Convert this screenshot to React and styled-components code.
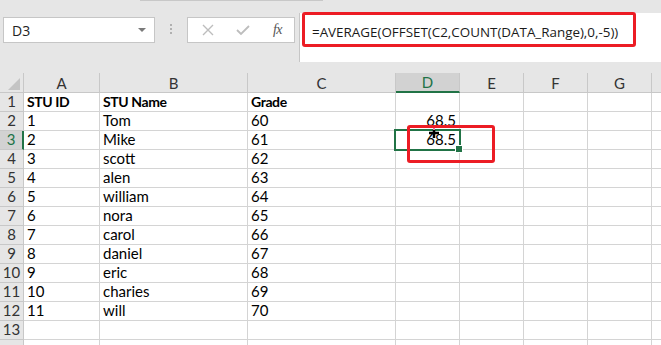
import React from 'react';
import styled, { createGlobalStyle } from 'styled-components';

const GlobalStyle = createGlobalStyle`
  html, body {
    margin: 0;
    padding: 0;
  }
  body {
    width: 661px;
    height: 345px;
    overflow: hidden;
    background: #e6e6e6;
  }
`;

const Window = styled.div`
  position: relative;
  width: 661px;
  height: 345px;
  overflow: hidden;
  background: #e6e6e6;
  font-family: Lato, 'Liberation Sans', sans-serif;
`;

const RibbonEdge = styled.div`
  margin-left: 140px;
  width: 183px;
  height: 1px;
  background: #c8c8c8;
`;

const Toolbar = styled.div`
  display: flex;
  align-items: flex-start;
  height: 72px;
  padding-top: 12px;
  box-sizing: border-box;
`;

const NameBox = styled.div`
  display: flex;
  align-items: center;
  justify-content: space-between;
  margin: 4px 0 0 3px;
  width: 152px;
  height: 26px;
  padding: 0 8px 0 8px;
  box-sizing: border-box;
  background: #fff;
  border: 1px solid #c6c6c6;
  font-family: 'Open Sans', 'Liberation Sans', sans-serif;
  font-size: 14px;
  color: #222;
`;

const DropArrow = styled.span`
  width: 0;
  height: 0;
  border-left: 4px solid transparent;
  border-right: 4px solid transparent;
  border-top: 4px solid #7a7a7a;
`;

const Grip = styled.div`
  display: flex;
  flex-direction: column;
  align-items: center;
  gap: 2px;
  width: 32px;
  margin-top: 11px;
  span {
    width: 2px;
    height: 2px;
    background: #b0b0b0;
  }
`;

const FxBox = styled.div`
  display: grid;
  grid-template-columns: repeat(3, 35px);
  align-items: center;
  justify-items: center;
  margin-top: 4px;
  width: 108px;
  height: 26px;
  padding-left: 2px;
  box-sizing: border-box;
  background: #fff;
  border: 1px solid #c6c6c6;
`;

const FxLabel = styled.span`
  font-family: 'Liberation Serif', serif;
  font-style: italic;
  font-size: 14px;
  color: #555;
  letter-spacing: -0.5px;
`;

const FormulaBar = styled.div`
  flex: 1;
  margin-left: 4px;
  height: 49px;
  padding: 9px 0 0 12px;
  box-sizing: border-box;
  background: #fff;
  border-left: 1px solid #c6c6c6;
  font-family: 'Open Sans', 'Liberation Sans', sans-serif;
  font-size: 13.4px;
  line-height: 20px;
  color: #1a1a1a;
  white-space: nowrap;
`;

const Sheet = styled.div`
  display: grid;
  grid-template-columns: 24px 76px 148px 148px 64px 64px 64px 64px 10px;
  grid-auto-rows: 19px;
  grid-template-rows: 20px;
  background: #fff;
`;

const Cell = styled.div`
  display: flex;
  align-items: flex-end;
  justify-content: ${({ $right }) => ($right ? 'flex-end' : 'flex-start')};
  padding: 0 3px 1px 3px;
  box-sizing: border-box;
  border-right: 1px solid #d4d4d4;
  border-bottom: 1px solid #d4d4d4;
  font-size: ${({ $bold }) => ($bold ? '14px' : '15px')};
  letter-spacing: ${({ $bold }) => ($bold ? '-0.4px' : '0')};
  line-height: 17px;
  font-weight: ${({ $bold }) => ($bold ? 700 : 400)};
  color: #000;
  white-space: nowrap;
  overflow: hidden;
`;

const ColHead = styled.div`
  display: flex;
  align-items: center;
  justify-content: center;
  box-sizing: border-box;
  background: ${({ $active }) => ($active ? '#d2d2d2' : '#e6e6e6')};
  border-right: 1px solid #c8c8c8;
  border-bottom: ${({ $active }) => ($active ? '2px solid #217346' : '1px solid #c8c8c8')};
  font-size: 15px;
  color: ${({ $active }) => ($active ? '#217346' : '#333')};
`;

const RowHead = styled.div`
  display: flex;
  align-items: flex-end;
  justify-content: center;
  padding-bottom: 1px;
  box-sizing: border-box;
  background: ${({ $active }) => ($active ? '#d2d2d2' : '#e6e6e6')};
  border-right: ${({ $active }) => ($active ? '2px solid #217346' : '1px solid #c8c8c8')};
  border-bottom: 1px solid #c8c8c8;
  font-size: 15px;
  line-height: 17px;
  color: ${({ $active }) => ($active ? '#217346' : '#333')};
`;

const Corner = styled.div`
  display: flex;
  align-items: flex-end;
  justify-content: flex-end;
  padding: 0 3px 2px 0;
  box-sizing: border-box;
  background: #e6e6e6;
  border-right: 1px solid #c8c8c8;
  border-bottom: 1px solid #c8c8c8;
  &::after {
    content: '';
    width: 0;
    height: 0;
    border-left: 12px solid transparent;
    border-bottom: 12px solid #c4c4c4;
  }
`;

const Selection = styled.div`
  position: absolute;
  left: 394px;
  top: 129px;
  width: 67px;
  height: 22px;
  box-sizing: border-box;
  border: 2px solid #217346;
  pointer-events: none;
`;

const FillHandle = styled.div`
  position: absolute;
  right: -4px;
  bottom: -4px;
  width: 6px;
  height: 6px;
  background: #217346;
  border: 1px solid #fff;
`;

const Highlight = styled.div`
  position: absolute;
  left: ${({ $x }) => $x}px;
  top: ${({ $y }) => $y}px;
  width: ${({ $w }) => $w}px;
  height: ${({ $h }) => $h}px;
  box-sizing: border-box;
  border: 3px solid #ec1c24;
  border-radius: 3px;
  pointer-events: none;
`;

const Cursor = styled.svg`
  position: absolute;
  left: 428px;
  top: 128px;
`;

const columns = ['A', 'B', 'C', 'D', 'E', 'F', 'G', ''];

const rows = [
  ['STU ID', 'STU Name', 'Grade', ''],
  ['1', 'Tom', '60', '68.5'],
  ['2', 'Mike', '61', '68.5'],
  ['3', 'scott', '62', ''],
  ['4', 'alen', '63', ''],
  ['5', 'william', '64', ''],
  ['6', 'nora', '65', ''],
  ['7', 'carol', '66', ''],
  ['8', 'daniel', '67', ''],
  ['9', 'eric', '68', ''],
  ['10', 'charies', '69', ''],
  ['11', 'will', '70', ''],
  ['', '', '', ''],
  ['', '', '', ''],
];

// only the first 13 row numbers are in view
const VISIBLE_ROWS = 13;

const App = () => {
  return (
    <Window>
      <GlobalStyle />
      <RibbonEdge />
      <Toolbar>
        <NameBox>
          D3
          <DropArrow />
        </NameBox>
        <Grip>
          <span />
          <span />
          <span />
        </Grip>
        <FxBox>
          <svg width="12" height="12" viewBox="0 0 12 12">
            <path d="M1 1 L11 11 M11 1 L1 11" stroke="#bdbdbd" strokeWidth="1.4" fill="none" />
          </svg>
          <svg width="14" height="12" viewBox="0 0 14 12">
            <path d="M1 6 L5 10 L13 2" stroke="#bdbdbd" strokeWidth="1.8" fill="none" />
          </svg>
          <FxLabel>fx</FxLabel>
        </FxBox>
        <FormulaBar>=AVERAGE(OFFSET(C2,COUNT(DATA_Range),0,-5))</FormulaBar>
      </Toolbar>

      <Sheet>
        <Corner />
        {columns.map((c, i) => (
          <ColHead key={i} $active={c === 'D'}>{c}</ColHead>
        ))}
        {rows.map((r, ri) => (
          <React.Fragment key={ri}>
            <RowHead $active={ri === 2}>{ri < VISIBLE_ROWS ? ri + 1 : ''}</RowHead>
            <Cell $bold={ri === 0}>{r[0]}</Cell>
            <Cell $bold={ri === 0}>{r[1]}</Cell>
            <Cell $bold={ri === 0}>{r[2]}</Cell>
            <Cell $right>{r[3]}</Cell>
            <Cell />
            <Cell />
            <Cell />
            <Cell />
          </React.Fragment>
        ))}
      </Sheet>

      <Selection>
        <FillHandle />
      </Selection>
      <Cursor width="12" height="10" viewBox="0 0 12 10">
        <rect x="5" y="0" width="2" height="2" fill="#e27aa8" />
        <path d="M6 2 V10 M1 5 H11" stroke="#000" strokeWidth="2.5" fill="none" />
      </Cursor>
      <Highlight $x={302} $y={12} $w={334} $h={35} />
      <Highlight $x={407} $y={125} $w={88} $h={38} />
    </Window>
  );
};

export default App;
